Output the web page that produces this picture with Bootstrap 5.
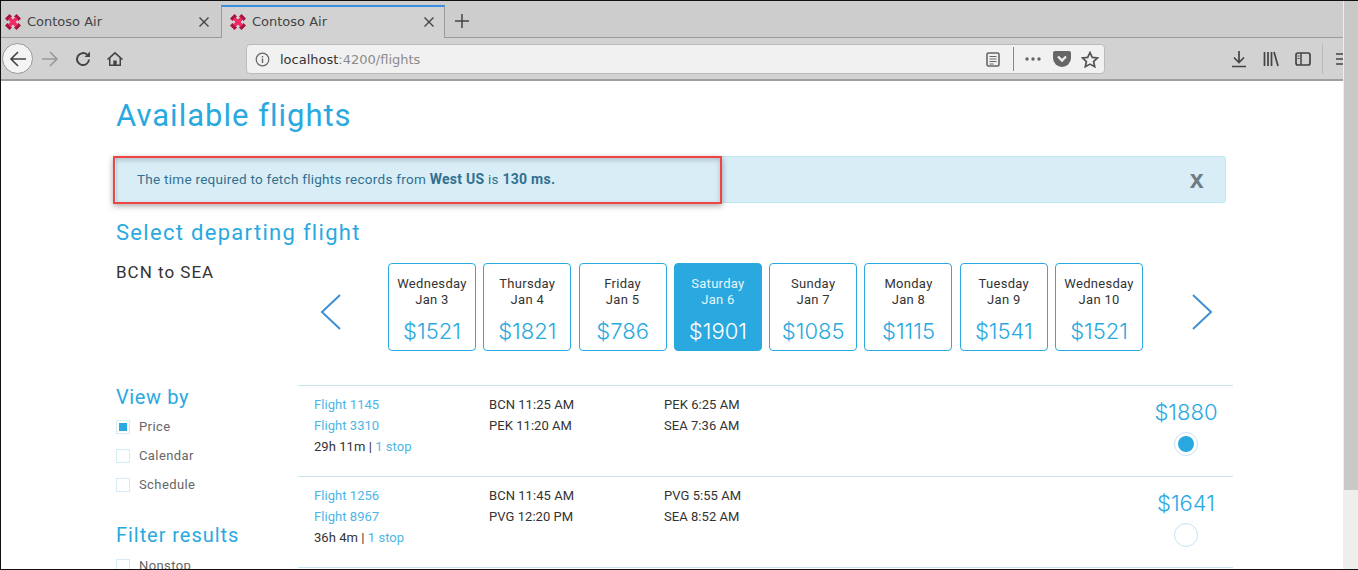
<!DOCTYPE html>
<html lang="en">

<head>
    <meta charset="UTF-8">
    <meta name="viewport" content="width=device-width, initial-scale=1.0">
    <title>Contoso Air</title>
    <link rel="stylesheet" href="https://cdn.jsdelivr.net/npm/bootstrap@5.3.3/dist/css/bootstrap.min.css">
    <style>
        html, body { height: 570px; overflow: hidden; }
        body { font-family: Roboto, sans-serif; color: #333; border-top: 1px solid #111; border-bottom: 1px solid #111; border-left: 1px solid #111; background: #fff; }
        .app-left { width: 1342px; }
        .tab-strip { height: 37px; background: #cdcdcd; border-bottom: 1px solid #9a9a9a; }
        .br-tab { width: 220px; height: 36px; padding: 5px 11px 0 4px; font-family: "DejaVu Sans", sans-serif; font-size: 13px; color: #444; gap: 6px; }
        .br-tab.on { background: #d2d2d2; border-top: 2px solid #3b8fe0; border-left: 1px solid #9a9a9a; border-right: 1px solid #9a9a9a; height: 33px; margin-top: 4px; margin-bottom: -1px; padding: 0 9px 2px 8px; width: 224px; }
        .new-tab { padding: 4px 0 0 10px; }
        .tool-bar { height: 43px; background: #d2d2d2; border-bottom: 2px solid #9f9f9f; padding-left: 1px; overflow: hidden; }
        .tool-bar svg { flex: none; }
        .back-btn { width: 31px; height: 31px; border-radius: 50%; background: #f4f4f4; border: 1px solid #999; flex: none; }
        .url-bar { margin-left: 123px; width: 859px; height: 30px; flex: none; background: #f1f1f1; border: 1px solid #bbb; border-radius: 4px; font-family: "DejaVu Sans", sans-serif; font-size: 13px; color: #333; padding: 1px 5px 0 8px; }
        .url-bar .dim { color: #8b8b8b; }
        .url-text { margin-left: 10px; padding-top: 2px; }
        .url-sep { height: 24px; border-left: 1px solid #888; margin: 0 10px 0 13px; }
        .pocket-ico { margin: 0 10px 0 11px; }
        .tool-sep { height: 30px; border-left: 1px solid #bbb; margin: 0 13px 0 11px; }
        .page-main { height: 489px; overflow: hidden; position: relative; }
        .scroll-col { width: 15px; background: #c9c9c9; border-left: 1px solid #eee; height: 568px; }
        .scroll-rest { height: 79px; background: #eee; margin-top: auto; }
        .page-wrap { padding-left: 115px; padding-top: 15px; }
        .page-title { font-size: 31px; color: #29a9e0; line-height: 40px; letter-spacing: 1px; margin: 0 0 20px 0; font-weight: 400; }
        .ms-alert { width: 1110px; height: 47px; background: #d9edf7; border: 1px solid #bce8f1; border-radius: 3px; color: #31708f; font-size: 13.5px; letter-spacing: .27px; padding: 0 21px 0 20px; margin: 0 0 15px 0; }
        .ms-alert b { font-weight: 700; font-size: 14px; }
        .ms-close { font-size: 25px; line-height: 1; font-weight: 700; color: #6d7b82; font-family: "Liberation Sans", sans-serif; }
        .sub-title { font-size: 22px; line-height: 30px; color: #29a9e0; letter-spacing: 1.3px; margin: 0; font-weight: 400; }
        .route-col { width: 182px; }
        .route-name { font-size: 17px; line-height: 24px; color: #333; letter-spacing: 1px; margin-top: 12px; }
        .date-row { margin-top: 15px; height: 122px; }
        .date-arrow { width: 90px; padding-left: 22px; padding-top: 31px; }
        .date-cards { gap: 7.3px; }
        .date-box { width: 88px; height: 88px; border: 1px solid #29a9e0; border-radius: 4px; text-align: center; font-size: 13px; line-height: 16px; padding-top: 12px; color: #333; letter-spacing: .3px; }
        .date-box .amt { font-family: Inter, sans-serif; font-weight: 350; font-size: 22px; line-height: 26px; color: #29a9e0; margin-top: 10px; letter-spacing: 0; }
        .date-box.picked { background: #29a9e0; color: #e6f5fc; }
        .date-box.picked .amt { color: #fff; }
        .date-next { padding-left: 48px; padding-top: 31px; }
        .side-col { width: 182px; }
        .side-head { font-size: 20px; line-height: 26px; color: #29a9e0; letter-spacing: .6px; margin: -1px 0 2px 0; font-weight: 400; }
        .side-head.second { letter-spacing: .95px; margin-top: 23px; margin-bottom: 3px; }
        .chk-line { height: 29px; font-size: 13px; color: #666; gap: 9px; letter-spacing: .4px; }
        .chk-box { width: 14px; height: 14px; border: 1px solid #d5ebf5; flex: none; }
        .chk-box.on { display: flex; align-items: center; justify-content: center; }
        .chk-box.on::after { content: ""; width: 8px; height: 8px; background: #29a9e0; }
        .flight-list { width: 935px; border-top: 1px solid #c9e3f0; }
        .flight-row { height: 91px; border-bottom: 1px solid #c9e3f0; padding: 8px 0 0 16px; font-size: 13px; line-height: 21px; color: #333; letter-spacing: .05px; }
        .flight-row a { color: #4db6e8; text-decoration: none; }
        .fl-col1, .fl-col2 { width: 175px; }
        .fl-price { width: 94px; margin-left: auto; text-align: center; padding-top: 5px; }
        .fl-amt { font-family: Inter, sans-serif; font-weight: 350; font-size: 22px; line-height: 26px; color: #29a9e0; letter-spacing: 0; }
        .fl-radio { width: 24px; height: 24px; border: 1px solid #c6e3f1; border-radius: 50%; margin: 7px auto 0; display: flex; align-items: center; justify-content: center; }
        .fl-radio.on::after { content: ""; width: 16px; height: 16px; border-radius: 50%; background: #29a9e0; }
        .red-mark { position: absolute; left: 112px; top: 75px; width: 609px; height: 48px; border: 2px solid #ef4444; box-shadow: 0 2px 6px rgba(0,0,0,.35), inset 0 2px 5px rgba(0,0,0,.2); }
    </style>
</head>

<body class="d-flex">
    <div class="app-left">
        <div class="tab-strip d-flex">
            <div class="br-tab d-flex align-items-center">
                <svg width="16" height="16" viewBox="0 0 16 16"><path fill="#a8123f" d="M0 4.500 4.500 0l2.500 2.500-4.500 4.500zM16 4.500 11.500 0 9 2.500l4.500 4.500zM0 11.500 4.500 16 7 13.500 2.500 9zM16 11.500 11.500 16 9 13.500l4.500-4.500z"/><path fill="#ee2a65" d="M8 5.500 5.500 3 3 5.500 5.500 8 3 10.500 5.500 13 8 10.500l2.500 2.500 2.500-2.500L10.500 8 13 5.500 10.500 3z"/></svg>
                <span class="flex-grow-1">Contoso Air</span>
                <svg width="12" height="12" viewBox="0 0 12 12"><path d="M1.500 1.500l9 9M10.500 1.500l-9 9" stroke="#444" stroke-width="1.400"/></svg>
            </div>
            <div class="br-tab on d-flex align-items-center">
                <svg width="16" height="16" viewBox="0 0 16 16"><path fill="#a8123f" d="M0 4.500 4.500 0l2.500 2.500-4.500 4.500zM16 4.500 11.500 0 9 2.500l4.500 4.500zM0 11.500 4.500 16 7 13.500 2.500 9zM16 11.500 11.500 16 9 13.500l4.500-4.500z"/><path fill="#ee2a65" d="M8 5.500 5.500 3 3 5.500 5.500 8 3 10.500 5.500 13 8 10.500l2.500 2.500 2.500-2.500L10.500 8 13 5.500 10.500 3z"/></svg>
                <span class="flex-grow-1">Contoso Air</span>
                <svg width="12" height="12" viewBox="0 0 12 12"><path d="M1.500 1.500l9 9M10.500 1.500l-9 9" stroke="#444" stroke-width="1.400"/></svg>
            </div>
            <div class="new-tab d-flex align-items-center">
                <svg width="14" height="14" viewBox="0 0 14 14"><path d="M7 0v14M0 7h14" stroke="#444" stroke-width="1.500"/></svg>
            </div>
        </div>

        <div class="tool-bar d-flex align-items-center">
            <div class="back-btn d-flex align-items-center justify-content-center">
                <svg width="18" height="16" viewBox="0 0 18 16"><path d="M9 1 2 8l7 7M2 8h15" fill="none" stroke="#444" stroke-width="1.600"/></svg>
            </div>
            <svg class="ms-2" width="18" height="16" viewBox="0 0 18 16"><path d="M9 1l7 7-7 7M16 8H1" fill="none" stroke="#999" stroke-width="1.600"/></svg>
            <svg class="ms-3" width="16" height="16" viewBox="0 0 16 16"><path d="M14 8.500A6 6 0 1 1 12 3.600" fill="none" stroke="#444" stroke-width="2"/><path d="M9.500 6H15V.5z" fill="#444"/></svg>
            <svg class="ms-3" width="16" height="16" viewBox="0 0 16 16"><path fill="#444" fill-rule="evenodd" d="M8 .8 16 8l-1 1.100-1-.9V15H2V8.200l-1 .9L0 8zM8 3 3.500 7v6.500h2.800V9.500h3.400v4h2.800V7z"/></svg>
            <div class="url-bar d-flex align-items-center">
                <svg width="15" height="15" viewBox="0 0 15 15"><circle cx="7.500" cy="7.500" r="6.300" fill="none" stroke="#666" stroke-width="1.200"/><path d="M7.500 6.500V11M7.500 4v1.400" stroke="#666" stroke-width="1.400"/></svg>
                <span class="url-text">localhost<span class="dim">:4200/flights</span></span>
                <svg class="ms-auto" width="14" height="15" viewBox="0 0 14 15"><rect x="1" y="1" width="12" height="13" rx="1.500" fill="none" stroke="#666" stroke-width="1.600"/><path d="M3.500 4.500h7M3.500 7h7M3.500 9.500h7M3.500 12h4" stroke="#666"/></svg>
                <span class="url-sep"></span>
                <svg width="18" height="6" viewBox="0 0 18 6"><circle cx="3" cy="3" r="1.700" fill="#666"/><circle cx="9" cy="3" r="1.700" fill="#666"/><circle cx="15" cy="3" r="1.700" fill="#666"/></svg>
                <svg class="pocket-ico" width="18" height="16" viewBox="0 0 18 16"><path d="M2 0h14a2 2 0 0 1 2 2v5a9 9 0 0 1-18 0V2a2 2 0 0 1 2-2z" fill="#666"/><path d="M5 5.500l4 4 4-4" fill="none" stroke="#eee" stroke-width="2.400"/></svg>
                <svg width="18" height="17" viewBox="0 0 18 17"><path d="M9 1.500l2.300 4.900 5.200.6-3.900 3.500 1.100 5.200L9 13.100l-4.700 2.600 1.100-5.200L1.500 7l5.200-.6z" fill="none" stroke="#555" stroke-width="1.700"/></svg>
            </div>
            <svg style="margin-left:126px" width="16" height="18" viewBox="0 0 16 18"><path d="M8 1v11M3 7.500l5 5 5-5M1 16.500h14" fill="none" stroke="#444" stroke-width="1.700"/></svg>
            <svg class="ms-3" width="16" height="16" viewBox="0 0 16 16"><path d="M1.500 1v14M5 1v14M8.500 1v14M11 1l4 14" stroke="#444" stroke-width="1.700"/></svg>
            <svg class="ms-3" width="16" height="14" viewBox="0 0 16 14"><rect x="1" y="1" width="14" height="12" rx="2" fill="none" stroke="#444" stroke-width="1.700"/><path d="M6 1v12" stroke="#444" stroke-width="1.500"/><path d="M2.500 4h2M2.500 6.500h2" stroke="#444"/></svg>
            <span class="tool-sep"></span>
            <svg width="8" height="14" viewBox="0 0 8 14"><path d="M0 2h8M0 7h8M0 12h8" stroke="#444" stroke-width="1.700"/></svg>
        </div>

        <div class="page-main">
            <div class="page-wrap">
                <h1 class="page-title">Available flights</h1>
                <div class="ms-alert d-flex align-items-center justify-content-between">
                    <span>The time required to fetch flights records from <b>West US</b> is <b>130 ms.</b></span>
                    <span class="ms-close">x</span>
                </div>
                <h2 class="sub-title">Select departing flight</h2>
                <div class="d-flex">
                    <div class="route-col"><div class="route-name">BCN to SEA</div></div>
                    <div class="date-row d-flex">
                        <div class="date-arrow">
                            <svg width="22" height="36" viewBox="0 0 22 36"><path d="M20 1 2 18l18 17" fill="none" stroke="#3f8fd2" stroke-width="2"/></svg>
                        </div>
                        <div class="date-cards d-flex">
                            <div class="date-box">Wednesday<br>Jan 3<div class="amt">$1521</div></div>
                            <div class="date-box">Thursday<br>Jan 4<div class="amt">$1821</div></div>
                            <div class="date-box">Friday<br>Jan 5<div class="amt">$786</div></div>
                            <div class="date-box picked">Saturday<br>Jan 6<div class="amt">$1901</div></div>
                            <div class="date-box">Sunday<br>Jan 7<div class="amt">$1085</div></div>
                            <div class="date-box">Monday<br>Jan 8<div class="amt">$1115</div></div>
                            <div class="date-box">Tuesday<br>Jan 9<div class="amt">$1541</div></div>
                            <div class="date-box">Wednesday<br>Jan 10<div class="amt">$1521</div></div>
                        </div>
                        <div class="date-next">
                            <svg width="22" height="36" viewBox="0 0 22 36"><path d="M2 1l18 17L2 35" fill="none" stroke="#3f8fd2" stroke-width="2"/></svg>
                        </div>
                    </div>
                </div>
                <div class="d-flex">
                    <div class="side-col">
                        <h3 class="side-head">View by</h3>
                        <div class="chk-line d-flex align-items-center"><span class="chk-box on"></span>Price</div>
                        <div class="chk-line d-flex align-items-center"><span class="chk-box"></span>Calendar</div>
                        <div class="chk-line d-flex align-items-center"><span class="chk-box"></span>Schedule</div>
                        <h3 class="side-head second">Filter results</h3>
                        <div class="chk-line d-flex align-items-center"><span class="chk-box"></span>Nonstop</div>
                    </div>
                    <div class="flight-list">
                        <div class="flight-row d-flex">
                            <div class="fl-col1"><a href="#">Flight 1145</a><br><a href="#">Flight 3310</a><br>29h 11m | <a href="#">1 stop</a></div>
                            <div class="fl-col2">BCN 11:25 AM<br>PEK 11:20 AM</div>
                            <div class="fl-col2">PEK 6:25 AM<br>SEA 7:36 AM</div>
                            <div class="fl-price"><div class="fl-amt">$1880</div><div class="fl-radio on"></div></div>
                        </div>
                        <div class="flight-row d-flex">
                            <div class="fl-col1"><a href="#">Flight 1256</a><br><a href="#">Flight 8967</a><br>36h 4m | <a href="#">1 stop</a></div>
                            <div class="fl-col2">BCN 11:45 AM<br>PVG 12:20 PM</div>
                            <div class="fl-col2">PVG 5:55 AM<br>SEA 8:52 AM</div>
                            <div class="fl-price"><div class="fl-amt">$1641</div><div class="fl-radio"></div></div>
                        </div>
                    </div>
                </div>
            </div>
            <div class="red-mark"></div>
        </div>
    </div>
    <div class="scroll-col d-flex flex-column"><div class="scroll-rest"></div></div>
    <script src="https://cdn.jsdelivr.net/npm/bootstrap@5.3.3/dist/js/bootstrap.bundle.min.js"></script>
</body>

</html>
